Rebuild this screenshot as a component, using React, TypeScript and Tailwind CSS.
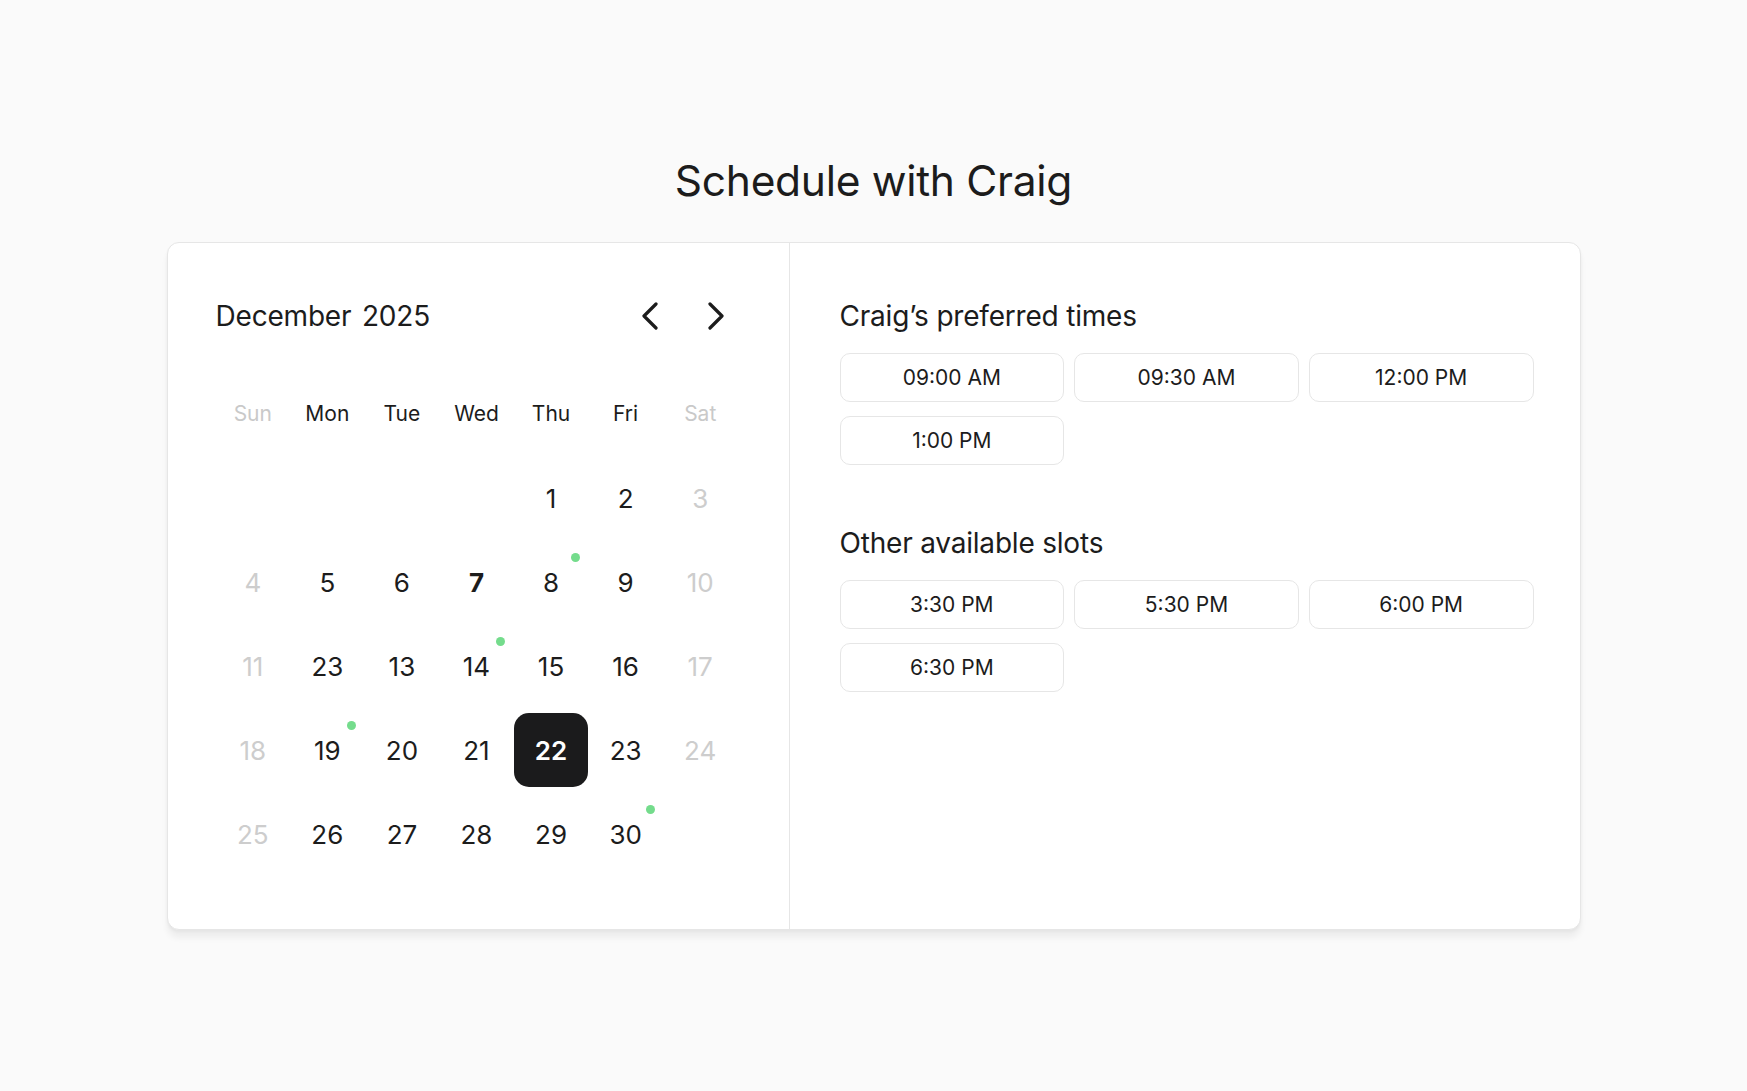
import { ReactNode } from 'react';

type Day = {
  n: number | null;
  weekend?: boolean;
  dot?: boolean;
  today?: boolean;
  selected?: boolean;
};

const weekdays = ['Sun', 'Mon', 'Tue', 'Wed', 'Thu', 'Fri', 'Sat'];

// december grid, rows as shown in the design
const rows: (number | null)[][] = [
  [null, null, null, null, 1, 2, 3],
  [4, 5, 6, 7, 8, 9, 10],
  [11, 23, 13, 14, 15, 16, 17],
  [18, 19, 20, 21, 22, 23, 24],
  [25, 26, 27, 28, 29, 30, null],
];

const dotDays = [8, 14, 19, 30];

const preferred = ['09:00 AM', '09:30 AM', '12:00 PM', '1:00 PM'];
const others = ['3:30 PM', '5:30 PM', '6:00 PM', '6:30 PM'];

function Chevron({ dir }: { dir: 'left' | 'right' }) {
  return (
    <button className="w-[44px] h-[44px] flex items-center justify-center text-[#1c1c1c]">
      <svg width="16" height="28" viewBox="0 0 16 28" fill="none">
        <polyline
          points={dir === 'left' ? '14,2 2,14 14,26' : '2,2 14,14 2,26'}
          stroke="currentColor"
          strokeWidth="3.2"
          strokeLinecap="round"
          strokeLinejoin="round"
        />
      </svg>
    </button>
  );
}

function DayCell({ day }: { day: Day }) {
  if (day.n === null) return <div className="h-[84px]" />;

  if (day.selected) {
    return (
      <div className="h-[84px] flex items-center justify-center">
        <div className="w-[74px] h-[74px] rounded-[15px] bg-[#1b1b1c] flex items-center justify-center text-white text-[26px] font-semibold">
          {day.n}
        </div>
      </div>
    );
  }

  return (
    <div className="h-[84px] flex items-center justify-center pt-[3px]">
      <div className="relative">
        <span
          className={`text-[26px] leading-none ${
            day.weekend ? 'text-[#cdcdcd]' : 'text-[#1c1c1c]'
          } ${day.today ? 'font-bold' : 'font-normal'}`}
        >
          {day.n}
        </span>
        {day.dot && (
          <span className="absolute left-1/2 top-1/2 ml-[20px] -mt-[31px] w-[9px] h-[9px] rounded-full bg-[#74dc8c]" />
        )}
      </div>
    </div>
  );
}

function SlotGroup({ title, slots, className }: { title: string; slots: string[]; className?: string }) {
  return (
    <div className={className}>
      <h3 className="text-[28px] leading-[32px] text-[#1c1c1c] font-normal tracking-[-0.2px]">{title}</h3>
      <div className="mt-[21px] grid grid-cols-3 gap-x-[10px] gap-y-[14px]">
        {slots.map((s) => (
          <button
            key={s}
            className="h-[49px] rounded-[10px] border-[1.5px] border-[#e6e6e6] bg-white text-[21px] text-[#1c1c1c] flex items-center justify-center"
          >
            {s}
          </button>
        ))}
      </div>
    </div>
  );
}

function Card({ children }: { children: ReactNode }) {
  return (
    <div className="w-[1414px] mx-auto flex bg-white border border-[#e6e6e6] rounded-[12px] shadow-[0_8px_6px_rgba(0,0,0,0.05),0_2px_3px_rgba(0,0,0,0.04)]">
      {children}
    </div>
  );
}

export default function App() {
  return (
    <div
      className="min-h-screen bg-[#fafafa] pt-[157px]"
      style={{ fontFamily: 'Inter, "Noto Sans", sans-serif' }}
    >
      <h1 className="text-center text-[42.5px] leading-[48px] text-[#1c1c1c] font-normal tracking-[-0.3px] mb-[37px]">
        Schedule with Craig
      </h1>

      <Card>
        {/* calendar */}
        <div className="w-[622px] shrink-0 border-r border-[#e6e6e6] pl-[48px] pr-[51px] pt-[51px] pb-[53px]">
          <div className="flex items-center justify-between h-[44px]">
            <span className="text-[28px] text-[#1c1c1c] font-normal tracking-[-0.2px] [word-spacing:3px]">
              December 2025
            </span>
            <div className="flex items-center gap-[22px]">
              <Chevron dir="left" />
              <Chevron dir="right" />
            </div>
          </div>

          <div className="mt-[34px] grid grid-cols-7">
            {weekdays.map((d, i) => (
              <div
                key={d}
                className={`h-[84px] flex items-center justify-center text-[21px] ${
                  i === 0 || i === 6 ? 'text-[#c9c9c9]' : 'text-[#1c1c1c]'
                }`}
              >
                {d}
              </div>
            ))}
            {rows.map((row, r) =>
              row.map((n, c) => (
                <DayCell
                  key={`${r}-${c}`}
                  day={{
                    n,
                    weekend: c === 0 || c === 6,
                    dot: n !== null && dotDays.includes(n) && !(r === 2 && c === 1),
                    today: n === 7,
                    selected: n === 22,
                  }}
                />
              ))
            )}
          </div>
        </div>

        {/* times */}
        <div className="flex-1 pl-[50px] pr-[46px] pt-[57px]">
          <SlotGroup title="Craig’s preferred times" slots={preferred} />
          <SlotGroup title="Other available slots" slots={others} className="mt-[62px]" />
        </div>
      </Card>
    </div>
  );
}
